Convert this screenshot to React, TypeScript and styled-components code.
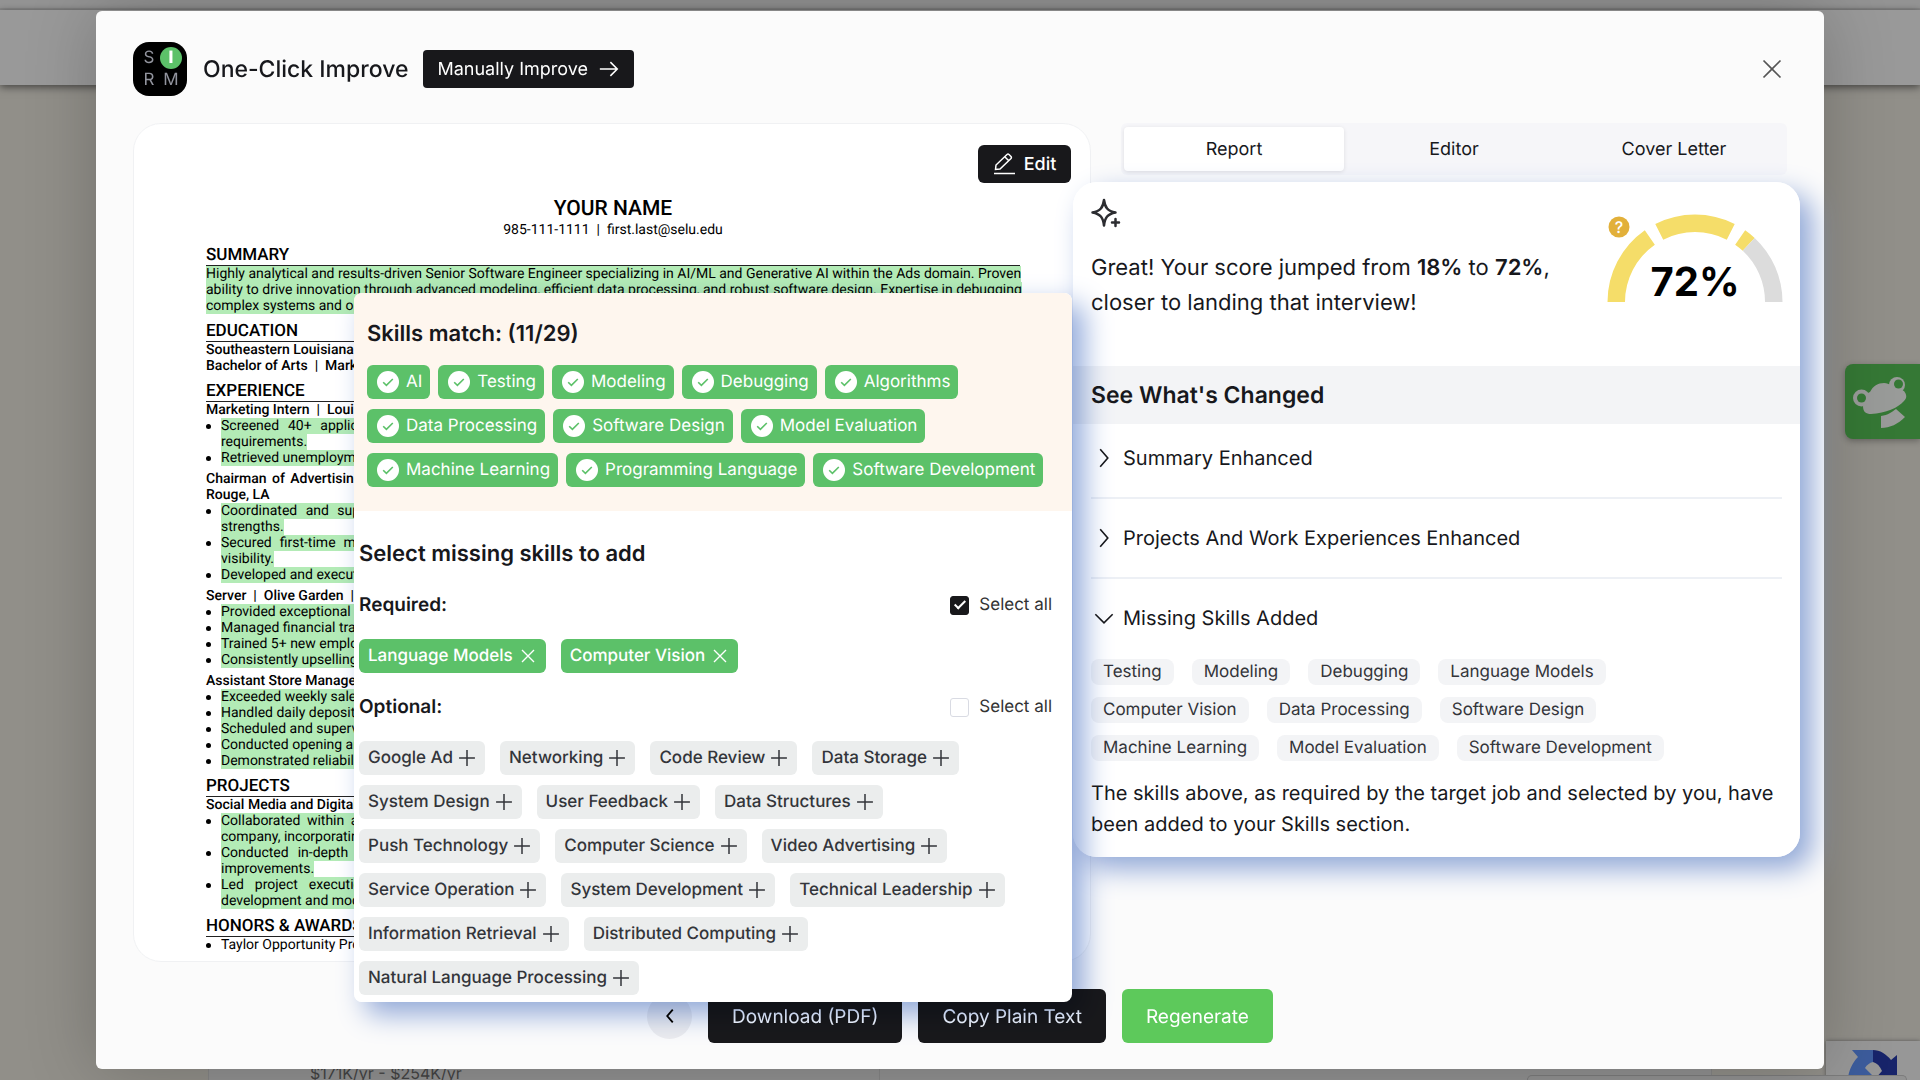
import React from "react";
import styled, { createGlobalStyle, css } from "styled-components";

const GlobalStyle = createGlobalStyle`
  *, *::before, *::after { box-sizing: border-box; }
  body {
    margin: 0;
    font-family: Inter, "Liberation Sans", sans-serif;
    text-rendering: geometricPrecision;
    color: #17181c;
    background: #918f89;
    overflow: hidden;
  }
  h1, h2, h3, p, ul { margin: 0; padding: 0; }
  ul { list-style: none; }
  button { font: inherit; text-rendering: inherit; border: 0; cursor: pointer; padding: 0; }
`;

/* ---------- page behind the dialog ---------- */

const Page = styled.div`
  min-height: 100vh;
  display: flex;
  flex-direction: column;
`;

const TopStrip = styled.div`
  height: 10px;
  background: #949494;
  border-bottom: 2px solid #888;
`;

const NavBar = styled.div`
  height: 75px;
  background: #999;
  box-shadow: 0 2px 8px rgba(0, 0, 0, 0.55);
`;

const JobStrip = styled.div`
  margin: auto 208px 0;
  height: 22px;
  display: flex;
  background: #919191;
  border: 1px solid #858585;
  border-width: 0 1px;
`;

const JobPay = styled.div`
  width: 671px;
  padding-left: 101px;
  border-right: 1px solid #858585;
  font-size: 16px;
  line-height: 30px;
  color: #444;
`;

const HelpButton = styled.button`
  position: fixed;
  top: 364px;
  right: 0;
  width: 75px;
  height: 75px;
  border-radius: 8px 0 0 8px;
  background: #357835;
  box-shadow: 0 2px 6px rgba(0, 0, 0, 0.3);
`;

const CaptchaBadge = styled.div`
  position: fixed;
  right: 0;
  bottom: 0;
  width: 94px;
  height: 39px;
  padding: 9px 0 0 21px;
  overflow: hidden;
  background: #979797;
  box-shadow: 0 0 4px #555;
`;

const SidePanelEdge = styled.div`
  position: fixed;
  right: 13px;
  bottom: 0;
  width: 380px;
  height: 5px;
  border: 1px solid #7c7c7c;
  border-bottom: 0;
  border-radius: 8px 8px 0 0;
  background: #929292;
`;

/* ---------- dialog ---------- */

const Overlay = styled.div`
  position: fixed;
  inset: 0;
  padding: 11px 5vw;
`;

const Dialog = styled.section`
  position: relative;
  z-index: 1;
  padding: 31px 37px 26px;
  border-radius: 6px;
  background: #fbfbfb;
  box-shadow: 0 0 70px rgba(0, 0, 0, 0.22);
`;

const Header = styled.header`
  display: flex;
  align-items: center;
  height: 54px;
  margin-bottom: 27px;
`;

const Logo = styled.div`
  display: grid;
  grid-template-columns: 22px 22px;
  grid-template-rows: 22px 22px;
  place-content: center;
  width: 54px;
  height: 54px;
  border-radius: 16px;
  background: #000;
`;

const LogoLetter = styled.span<{ $active?: boolean }>`
  display: grid;
  place-items: center;
  border-radius: 50%;
  font-size: 17px;
  line-height: 22px;
  color: ${(p) => (p.$active ? "#fff" : "#92949e")};
  font-weight: ${(p) => (p.$active ? 800 : 400)};
  background: ${(p) => (p.$active ? "#5cc169" : "transparent")};
`;

const Title = styled.h1`
  margin: 0 15px 0 16px;
  font-size: 23px;
  line-height: 32px;
  font-weight: 500;
`;

const darkButton = css`
  display: flex;
  align-items: center;
  justify-content: center;
  border-radius: 6px;
  background: #18181b;
  color: #fff;
`;

const ManualButton = styled.button`
  ${darkButton}
  gap: 10px;
  height: 38px;
  padding: 0 14px;
  border-radius: 4px;
  font-size: 18px;
`;

const CloseButton = styled.button`
  display: grid;
  place-items: center;
  margin-left: auto;
  width: 30px;
  height: 30px;
  background: none;
  color: #555;
`;

const Columns = styled.div`
  display: grid;
  grid-template-columns: minmax(0, 958fr) minmax(0, 666fr);
  gap: 30px;
`;

/* ---------- resume ---------- */

const ResumePanel = styled.article`
  position: relative;
  padding: 72px 70px 8px 72px;
  border: 1px solid #f0f1f3;
  border-radius: 28px;
  background: #fff;
  color: #000;
  font-family: Roboto, "Liberation Sans", sans-serif;
  font-size: 14px;
  line-height: 16px;
`;

const EditButton = styled.button`
  ${darkButton}
  position: absolute;
  top: 21px;
  right: 19px;
  gap: 9px;
  width: 93px;
  height: 38px;
  font: 500 18px Inter, "Liberation Sans", sans-serif;
`;

const CandidateName = styled.h2`
  font-size: 21px;
  line-height: 26px;
  font-weight: 500;
  text-align: center;
`;

const Contact = styled.p`
  text-align: center;
  white-space: pre;
`;

const SectionTitle = styled.h3`
  height: 20px;
  margin-top: 8px;
  border-bottom: 1px solid #222;
  font-size: 17px;
  line-height: 19px;
  font-weight: 500;
`;

const Role = styled.div<{ $spaced?: boolean }>`
  margin-top: ${(p) => (p.$spaced ? 5 : 0)}px;
  font-weight: 500;
  white-space: pre;
`;

const BulletItem = styled.li`
  position: relative;
  padding-left: 15px;

  &::before {
    content: "";
    position: absolute;
    left: 0;
    top: 6px;
    width: 5px;
    height: 5px;
    border-radius: 50%;
    background: #000;
  }
`;

const TextLine = styled.span<{ $full?: boolean }>`
  display: block;
  height: 16px;
  white-space: ${(p) => (p.$full ? "normal" : "nowrap")};
  text-align: justify;
  text-align-last: ${(p) => (p.$full ? "justify" : "left")};
`;

const Changed = styled.mark`
  background: #b3ebb6;
  color: inherit;
`;

/* ---------- floating cards ---------- */

const glow = css`
  mix-blend-mode: multiply;
  pointer-events: none;
  box-shadow: 12px 12px 28px rgb(146, 170, 219);
`;

const SkillsFloat = styled.div`
  position: absolute;
  top: 169px;
  left: 220px;
  right: 18px;
  font-family: Inter, "Liberation Sans", sans-serif;
  color: #17181c;
`;

const SkillsGlow = styled.div`
  ${glow}
  position: absolute;
  inset: 0;
  z-index: 3;
  border-radius: 8px;
`;

const SkillsCard = styled.div`
  position: relative;
  z-index: 4;
  overflow: hidden;
  border-radius: 8px;
  background: #fff;
`;

const MatchArea = styled.div`
  padding: 27px 13px 24px;
  background: #fef6ee;
`;

const CardTitle = styled.h2<{ $large?: boolean }>`
  font-size: ${(p) => (p.$large ? 23 : 22)}px;
  line-height: 28px;
  font-weight: 600;
`;

const ChipRow = styled.div<{ $gap: number }>`
  display: flex;
  flex-wrap: wrap;
  gap: 10px ${(p) => p.$gap}px;
`;

const MatchChips = styled(ChipRow)`
  margin-top: 17px;
`;

const MatchChip = styled.span`
  display: flex;
  align-items: center;
  gap: 7px;
  height: 34px;
  padding: 0 8px 0 10px;
  border-radius: 6px;
  background: #5cc169;
  color: #fff;
  font-size: 17px;
`;

const MissingArea = styled.div`
  padding: 29px 20px 7px 5px;
`;

const GroupHead = styled.div`
  display: flex;
  align-items: center;
  justify-content: space-between;
  height: 28px;
  margin: 20px 0;

  h2 + & { margin-top: 23px; }
`;

const GroupTitle = styled.h3`
  font-size: 19px;
  line-height: 28px;
  font-weight: 600;
`;

const SelectAll = styled.label`
  display: flex;
  align-items: center;
  gap: 10px;
  font-size: 17px;
  color: #333;
`;

const CheckBox = styled.input`
  appearance: none;
  display: grid;
  place-items: center;
  width: 19px;
  height: 19px;
  margin: 0;
  border: 1px solid #d9dbe3;
  border-radius: 3px;
  background: #fff;

  &:checked {
    border-color: #18181b;
    background: #18181b;
  }

  &:checked::after {
    content: "";
    width: 6px;
    height: 11px;
    margin-bottom: 3px;
    border: solid #fff;
    border-width: 0 2px 2px 0;
    transform: rotate(45deg);
  }
`;

const SkillButton = styled.button<{ $on?: boolean }>`
  display: flex;
  align-items: center;
  gap: ${(p) => (p.$on ? 6 : 4)}px;
  height: 34px;
  padding: 0 ${(p) => (p.$on ? 9 : 8)}px 0 9px;
  border-radius: 6px;
  font-size: 17px;
  font-weight: 500;
  background: ${(p) => (p.$on ? "#5cc169" : "#ebeded")};
  color: ${(p) => (p.$on ? "#fff" : "#33353a")};
`;

/* ---------- report ---------- */

const TabList = styled.div`
  display: grid;
  grid-template-columns: repeat(3, 1fr);
  padding: 4px 3px;
  border-radius: 6px;
  background: #f6f6f9;
`;

const Tab = styled.button<{ $active?: boolean }>`
  height: 44px;
  border-radius: 4px;
  font-size: 18px;
  color: #17181c;
  background: ${(p) => (p.$active ? "#fff" : "transparent")};
  box-shadow: ${(p) => (p.$active ? "0 1px 4px rgba(0, 0, 0, 0.1)" : "none")};
`;

const ReportFloat = styled.div`
  position: relative;
  margin: 7px -13px 0 -48px;
`;

const ReportGlow = styled.div`
  ${glow}
  position: absolute;
  inset: 0;
  z-index: 1;
  border-radius: 24px;
`;

const ReportCard = styled.div`
  position: relative;
  z-index: 2;
  overflow: hidden;
  border-radius: 24px;
  background: #fff;
`;

const ScoreArea = styled.div`
  display: flex;
  justify-content: space-between;
  padding: 16px 17px 45px 18px;
`;

const Sparkle = styled.svg`
  display: block;
`;

const ScoreText = styled.p`
  margin-top: 23px;
  font-size: 22px;
  line-height: 35px;

  b { font-weight: 600; }
`;

const Gauge = styled.svg`
  margin-top: 15px;
`;

const ChangedBand = styled.div`
  padding: 15px 18px;
  background: #f3f4f6;
`;

const Changes = styled.div`
  padding: 0 18px 17px;
`;

const ChangeRow = styled.button<{ $first?: boolean; $open?: boolean }>`
  display: flex;
  align-items: center;
  gap: 6px;
  width: 100%;
  padding: ${(p) => (p.$first ? 19 : 24)}px 0 24px;
  border-bottom: ${(p) => (p.$open ? "0" : "2px solid #edf0f5")};
  background: none;
  font-size: 20px;
  line-height: 30px;
  color: #17181c;
`;

const AddedSkills = styled.ul`
  display: flex;
  flex-wrap: wrap;
  gap: 12px 18px;
  margin: 2px 0 17px;
  padding-right: 28px;
`;

const AddedSkill = styled.li`
  padding: 0 12px;
  border-radius: 8px;
  background: #f3f4f6;
  color: #33353a;
  font-size: 17px;
  line-height: 26px;
`;

const Note = styled.p`
  font-size: 20px;
  line-height: 31px;
`;

/* ---------- footer ---------- */

const Footer = styled.footer`
  display: flex;
  align-items: center;
  justify-content: center;
  gap: 16px;
  margin-top: 27px;
`;

const PrevButton = styled.button`
  display: grid;
  place-items: center;
  width: 45px;
  height: 45px;
  border-radius: 50%;
  background: #ececee;
`;

const ActionButton = styled.button<{ $primary?: boolean }>`
  ${darkButton}
  height: 54px;
  padding: 0 24px;
  font-size: 19px;
  background: ${(p) => (p.$primary ? "#5dc95b" : "#18181b")};
`;

/* ---------- icons ---------- */

type IconProps = { size: number; d: string; width?: number };
const Icon = ({ size, d, width = 1.5 }: IconProps) => (
  <svg width={size} height={size} viewBox="0 0 24 24" fill="none" stroke="currentColor" strokeWidth={width} aria-hidden="true">
    <path d={d} />
  </svg>
);

const CheckCircle = () => (
  <svg width="22" height="22" viewBox="0 0 22 22" aria-hidden="true">
    <circle cx="11" cy="11" r="11" fill="#fff" />
    <path d="M6.2 11.2l3.2 3.2L15.8 8" fill="none" stroke="#5cc169" strokeWidth="1.6" />
  </svg>
);

/* ---------- data ---------- */

const matched = ["AI", "Testing", "Modeling", "Debugging", "Algorithms", "Data Processing", "Software Design", "Model Evaluation", "Machine Learning", "Programming Language", "Software Development"];
const required = ["Language Models", "Computer Vision"];
const optional = ["Google Ad", "Networking", "Code Review", "Data Storage", "System Design", "User Feedback", "Data Structures", "Push Technology", "Computer Science", "Video Advertising", "Service Operation", "System Development", "Technical Leadership", "Information Retrieval", "Distributed Computing", "Natural Language Processing"];
const added = ["Testing", "Modeling", "Debugging", "Language Models", "Computer Vision", "Data Processing", "Software Design", "Machine Learning", "Model Evaluation", "Software Development"];

const Bullet = ({ lines }: { lines: string[] }) => (
  <BulletItem>
    {lines.map((line, i) => (
      <TextLine key={line} $full={i < lines.length - 1}>
        <Changed>{line}</Changed>
      </TextLine>
    ))}
  </BulletItem>
);

const Bullets = ({ items }: { items: string[][] }) => (
  <ul>
    {items.map((lines) => (
      <Bullet key={lines[0]} lines={lines} />
    ))}
  </ul>
);

const Resume = () => (
  <>
    <CandidateName>YOUR NAME</CandidateName>
    <Contact>{"985-111-1111  |  first.last@selu.edu"}</Contact>

    <SectionTitle>SUMMARY</SectionTitle>
    <TextLine><Changed>Highly analytical and results-driven Senior Software Engineer specializing in AI/ML and Generative AI within the Ads domain. Proven</Changed></TextLine>
    <TextLine><Changed>ability to drive innovation through advanced modeling, efficient data processing, and robust software design. Expertise in debugging</Changed></TextLine>
    <TextLine><Changed>complex systems and optimizing</Changed></TextLine>

    <SectionTitle>EDUCATION</SectionTitle>
    <Role>Southeastern Louisiana</Role>
    <Role>{"Bachelor of Arts  |  Marketing"}</Role>

    <SectionTitle>EXPERIENCE</SectionTitle>
    <Role>{"Marketing Intern  |  Louisiana"}</Role>
    <Bullets items={[
      ["Screened 40+ applicants by phone and email each week and matched all their skills closely to every open position", "requirements."],
      ["Retrieved unemployment"],
    ]} />
    <Role $spaced>
      <TextLine $full>Chairman of Advertising, Student Programming Board, Campus Activities and Events Committee, Southeastern State, in Baton</TextLine>
      <TextLine>Rouge, LA</TextLine>
    </Role>
    <Bullets items={[
      ["Coordinated and supported a team of six student volunteers, assigning all work on the basis of their own individual", "strengths."],
      ["Secured first-time media sponsors for campus events and raised the total number of monthly posts for much greater", "visibility."],
      ["Developed and executed"],
    ]} />
    <Role $spaced>{"Server  |  Olive Garden  |  LA"}</Role>
    <Bullets items={[["Provided exceptional care"], ["Managed financial transfers"], ["Trained 5+ new employees"], ["Consistently upselling"]]} />
    <Role $spaced>Assistant Store Manager</Role>
    <Bullets items={[["Exceeded weekly sales"], ["Handled daily deposits"], ["Scheduled and supervised"], ["Conducted opening and"], ["Demonstrated reliability"]]} />

    <SectionTitle>PROJECTS</SectionTitle>
    <Role>Social Media and Digital</Role>
    <Bullets items={[
      ["Collaborated within a team of five students to plan and write a full digital marketing strategy for one growing local retail", "company, incorporating"],
      ["Conducted in-depth research on the habits of target customers and wrote recommendations for several key product", "improvements."],
      ["Led project execution for all client tasks, with regular progress reports on content, schedules, site management", "development and modeling"],
    ]} />

    <SectionTitle>HONORS &amp; AWARDS</SectionTitle>
    <BulletItem as="div"><TextLine>Taylor Opportunity Program</TextLine></BulletItem>
  </>
);

const SkillGroup = ({ title, checked, skills, icon }: { title: string; checked: boolean; skills: string[]; icon: React.ReactNode }) => (
  <>
    <GroupHead>
      <GroupTitle>{title}:</GroupTitle>
      <SelectAll>
        <CheckBox type="checkbox" defaultChecked={checked} />
        Select all
      </SelectAll>
    </GroupHead>
    <ChipRow $gap={15}>
      {skills.map((s) => (
        <SkillButton key={s} $on={checked}>{s}{icon}</SkillButton>
      ))}
    </ChipRow>
  </>
);

const SkillsPopup = () => (
  <SkillsFloat>
    <SkillsGlow />
    <SkillsCard>
      <MatchArea>
        <CardTitle>Skills match: (11/29)</CardTitle>
        <MatchChips $gap={8}>
          {matched.map((s) => (
            <MatchChip key={s}><CheckCircle />{s}</MatchChip>
          ))}
        </MatchChips>
      </MatchArea>
      <MissingArea>
        <CardTitle>Select missing skills to add</CardTitle>
        <SkillGroup title="Required" checked skills={required} icon={<Icon size={18} d="M4 4l16 16M20 4L4 20" width={1.8} />} />
        <SkillGroup title="Optional" checked={false} skills={optional} icon={<Icon size={20} d="M12 2.500v19M2.500 12h19" width={1.8} />} />
      </MissingArea>
    </SkillsCard>
  </SkillsFloat>
);

const point = (r: number, deg: number) => {
  const a = (deg * Math.PI) / 180;
  return `${(89 - r * Math.cos(a)).toFixed(2)} ${(89 - r * Math.sin(a)).toFixed(2)}`;
};
const arc = (from: number, to: number) =>
  `M${point(87.5, from)}A87.5 87.5 0 0 1 ${point(87.5, to)}L${point(70, to)}A70 70 0 0 0 ${point(70, from)}Z`;

const ScoreGauge = () => (
  <Gauge width="177" height="100" viewBox="0 0 177 100" role="img" aria-label="Score 72%">
    <path d={arc(0, 55)} fill="#f5dd69" />
    <path d={arc(63, 117)} fill="#f5dd69" />
    <path d={arc(125, 133)} fill="#f5dd69" />
    <path d={arc(133, 180)} fill="#dcdcdc" />
    <circle cx="13" cy="14" r="10.5" fill="#e2b03a" />
    <text x="13" y="20" fontSize="16" fontWeight="500" textAnchor="middle" fill="#fff">?</text>
    <text x="89" y="83" fontSize="40" fontWeight="700" textAnchor="middle" fill="#000">72%</text>
  </Gauge>
);

const Report = () => (
  <div>
    <TabList role="tablist">
      <Tab role="tab" $active aria-selected="true">Report</Tab>
      <Tab role="tab">Editor</Tab>
      <Tab role="tab">Cover Letter</Tab>
    </TabList>
    <ReportFloat>
      <ReportGlow />
      <ReportCard>
        <ScoreArea>
          <div>
            <Sparkle width="30" height="30" viewBox="0 0 30 30" fill="none" stroke="#2c2d31" strokeWidth="2.5" strokeLinejoin="round" aria-hidden="true">
              <path d="M13 2c1 7.500 3.500 11 11.500 12.500C16.500 16 14 19.500 13 27.500 12 19.500 9.500 16 1.500 14.500 9.500 13 12 9.500 13 2z" />
              <path d="M24.500 21v7M21 24.500h7" strokeLinecap="round" />
            </Sparkle>
            <ScoreText>
              Great! Your score jumped from <b>18%</b> to <b>72%</b>,<br />
              closer to landing that interview!
            </ScoreText>
          </div>
          <ScoreGauge />
        </ScoreArea>
        <ChangedBand><CardTitle $large>See What's Changed</CardTitle></ChangedBand>
        <Changes>
          <ChangeRow $first><Icon size={26} d="M8.500 4l7 8-7 8" />Summary Enhanced</ChangeRow>
          <ChangeRow><Icon size={26} d="M8.500 4l7 8-7 8" />Projects And Work Experiences Enhanced</ChangeRow>
          <ChangeRow $open><Icon size={26} d="M4 8.500l8 8 8-8" />Missing Skills Added</ChangeRow>
          <AddedSkills>
            {added.map((s) => <AddedSkill key={s}>{s}</AddedSkill>)}
          </AddedSkills>
          <Note>The skills above, as required by the target job and selected by you, have been added to your Skills section.</Note>
        </Changes>
      </ReportCard>
    </ReportFloat>
  </div>
);

export default function App() {
  return (
    <>
      <GlobalStyle />
      <Page>
        <TopStrip />
        <NavBar />
        <JobStrip>
          <JobPay>$171K/yr - $254K/yr</JobPay>
        </JobStrip>
      </Page>
      <HelpButton aria-label="Help">
        <svg width="75" height="75" viewBox="0 0 75 75" fill="#999b99" aria-hidden="true">
          <circle cx="17" cy="34" r="6.500" />
          <circle cx="52" cy="21" r="8" />
          <path d="M18 42C17 34 22 29 25 28c3-6 8-9 14-9 3 0 5 1 6 2l14 6c3 4 3 7 0 10-6 7-18 12-33 13-5 0-8-2-8-8z" />
          <circle cx="16.500" cy="34" r="8.500" />
          <circle cx="16.500" cy="34" r="4.500" fill="#357835" />
          <circle cx="53.500" cy="20" r="4.500" fill="#357835" />
          <path d="M36 52c7-1 11-4 15-7l9 8c-7 7-15 11-24 11z" />
        </svg>
      </HelpButton>
      <CaptchaBadge>
        <svg width="52" height="40" viewBox="0 0 52 40" aria-hidden="true">
          <path d="M26 0v12a13 13 0 0 0-8 6l7 7-8 15H0C0 24 4 14 11 7L5 0z" fill="#3c5c9c" />
          <path d="M26 0c7 0 13 4 18 10l6-5v24H28l7-8c-2-5-5-8-9-9z" fill="#18246a" />
        </svg>
      </CaptchaBadge>
      <SidePanelEdge />
      <Overlay>
        <Dialog role="dialog" aria-label="One-Click Improve">
          <Header>
            <Logo aria-hidden="true">
              <LogoLetter>S</LogoLetter>
              <LogoLetter $active>I</LogoLetter>
              <LogoLetter>R</LogoLetter>
              <LogoLetter>M</LogoLetter>
            </Logo>
            <Title>One-Click Improve</Title>
            <ManualButton>
              Manually Improve
              <Icon size={22} d="M2 12h19M13.500 4.500L21 12l-7.500 7.500" width={1.7} />
            </ManualButton>
            <CloseButton aria-label="Close"><Icon size={24} d="M3.500 3.500l17 17M20.500 3.500l-17 17" width={1.7} /></CloseButton>
          </Header>
          <Columns>
            <ResumePanel>
              <EditButton>
                <svg width="22" height="22" viewBox="0 0 22 22" fill="none" stroke="currentColor" strokeWidth="1.500" aria-hidden="true">
                  <path d="M2.500 16.500l.5-4.500L14 1.500q1-.8 2 0l2 2q.8 1 0 2L7 16zM12 4l4 4M1 20.500h21" />
                </svg>
                Edit
              </EditButton>
              <Resume />
              <SkillsPopup />
            </ResumePanel>
            <Report />
          </Columns>
          <Footer>
            <PrevButton aria-label="Previous"><Icon size={22} d="M15 5l-6 7 6 7" width={2} /></PrevButton>
            <ActionButton>Download (PDF)</ActionButton>
            <ActionButton>Copy Plain Text</ActionButton>
            <ActionButton $primary>Regenerate</ActionButton>
          </Footer>
        </Dialog>
      </Overlay>
    </>
  );
}
